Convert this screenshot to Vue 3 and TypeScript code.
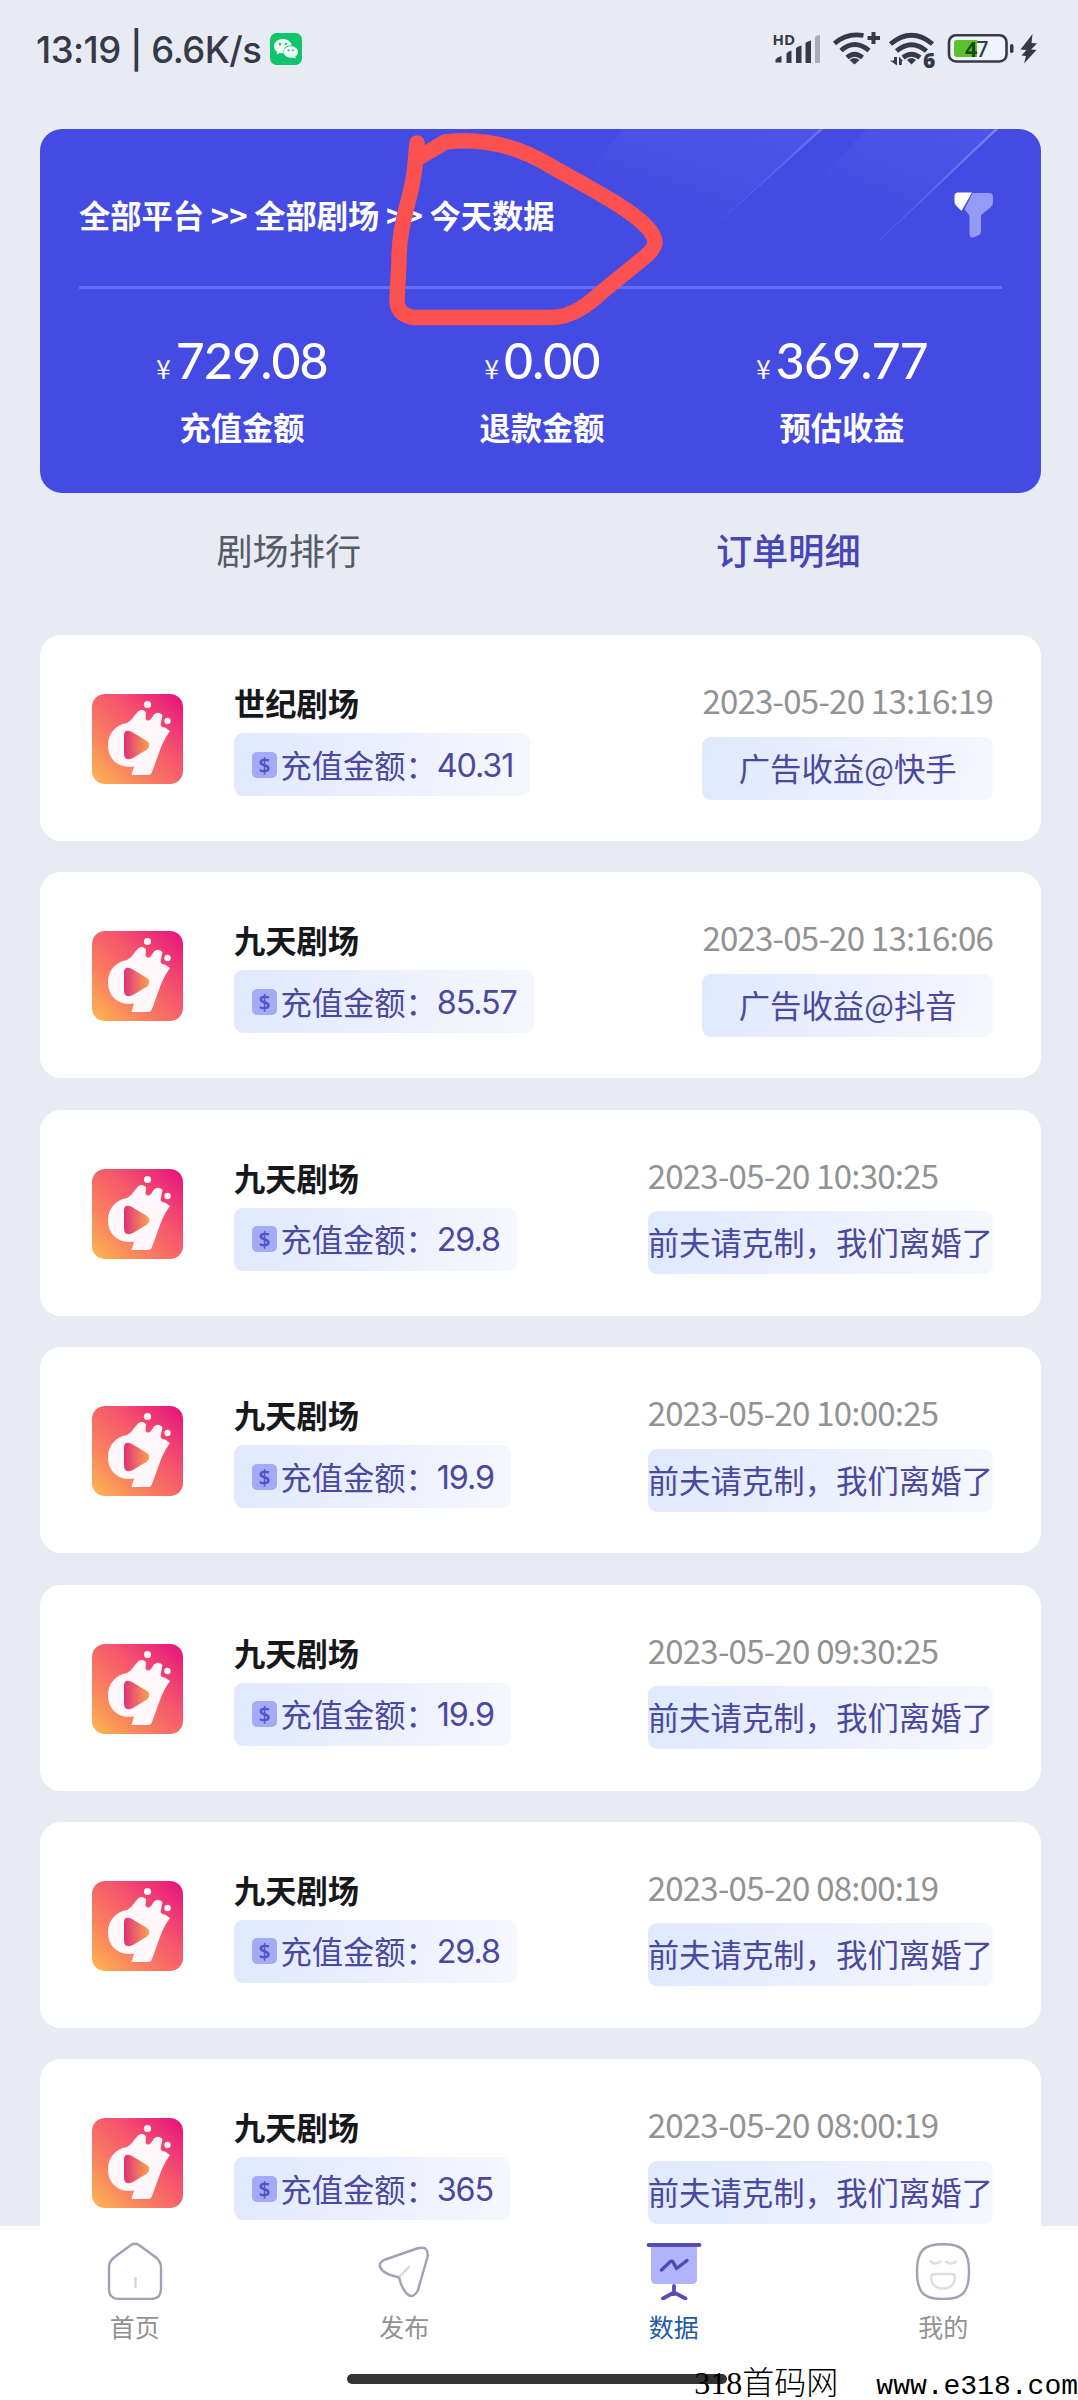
<script setup lang="ts">
interface Metric {
  label: string
  value: string
}

interface Order {
  theater: string
  amount: string
  time: string
  source: string
}

const metrics: Metric[] = [
  { label: '充值金额', value: '729.08' },
  { label: '退款金额', value: '0.00' },
  { label: '预估收益', value: '369.77' },
]

const drama = '前夫请克制，我们离婚了'

const orders: Order[] = [
  { theater: '世纪剧场', amount: '40.31', time: '2023-05-20 13:16:19', source: '广告收益@快手' },
  { theater: '九天剧场', amount: '85.57', time: '2023-05-20 13:16:06', source: '广告收益@抖音' },
  { theater: '九天剧场', amount: '29.8', time: '2023-05-20 10:30:25', source: drama },
  { theater: '九天剧场', amount: '19.9', time: '2023-05-20 10:00:25', source: drama },
  { theater: '九天剧场', amount: '19.9', time: '2023-05-20 09:30:25', source: drama },
  { theater: '九天剧场', amount: '29.8', time: '2023-05-20 08:00:19', source: drama },
  { theater: '九天剧场', amount: '365', time: '2023-05-20 08:00:19', source: drama },
]
</script>

<template>
  <div class="page">
    <header class="status">
      <span class="clock">13:19 | 6.6K/s</span>
      <svg class="wechat" width="32" height="32" viewBox="0 0 32 32">
        <rect width="32" height="32" rx="6.5" fill="#10c46c" />
        <path d="M13 6C7.800 6 4 9.200 4 13.200c0 2.300 1.200 4.200 3.100 5.500L6.500 21.500l3.200-1.600c1 .3 2.100.4 3.300.4l.6 0a6.500 6 0 0 1-.2-1.700c0-3.600 3.400-6.400 7.800-6.400l.6 0C21 8.600 17.400 6 13 6z" fill="#effff5" />
        <path d="M20.800 13.300c-4 0-7.200 2.500-7.200 5.700s3.200 5.700 7.200 5.700c.9 0 1.700-.1 2.500-.3l2.400 1.200-.5-2.200c1.800-1.100 2.800-2.600 2.800-4.400 0-3.200-3.200-5.700-7.200-5.700z" fill="#effff5" />
        <g fill="#10c46c"><circle cx="10" cy="11" r="1.200" /><circle cx="15.700" cy="11" r="1.200" /><circle cx="18.500" cy="17.300" r="1" /><circle cx="23" cy="17.300" r="1" /></g>
      </svg>
      <svg class="signals" width="270" height="44" viewBox="770 28 270 44">
        <text x="772.500" y="45" class="hd">HD</text>
        <g fill="#363947">
          <path d="M775.500 62.500v-3q2-3 6-3.500v6.500z" />
          <path d="M786.500 63v-9.500q2-2.500 5-3v12.500z" />
          <path d="M796 63V48q2-2 5.500-2.500V63z" />
          <path d="M805.500 63V43q2-2 5.500-2.500V63z" />
        </g>
        <path d="M815 63V37q2-2 5-2v28z" fill="#a9abb5" />
        <g fill="none" stroke="#363947" stroke-width="4.800">
          <path d="M834.500 43.500Q847 32.500 863.500 35.500" />
          <path d="M841 50.500Q854.500 38.500 869 50.500" />
          <path d="M847 57.500Q854.500 51 862.500 57.500" />
          <path d="M890.500 44Q911.500 26.500 932.500 44" />
          <path d="M896.500 51Q911.500 38.500 926.500 51" />
          <path d="M903 57.500Q911.500 51 920 57.500" />
          <path d="M873.500 32V44M867.500 38H880" stroke-width="4" />
        </g>
        <g fill="#363947">
          <path d="M849.500 60Q854.500 56 859.500 60L854.500 64.500z" />
          <path d="M907 60Q911.500 56 916 60L911.500 64.500z" />
          <path d="M894 57h3v8.500L890 60.500h4zM899 65v-8.500l4 4.500h-1.200v4z" />
        </g>
        <text x="923" y="67.500" class="six">6</text>
        <rect x="949" y="35.200" width="57.500" height="26.300" rx="7" fill="#f1f3fa" stroke="#363947" stroke-width="2.600" />
        <path d="M957 40h20v17h-20q-3 0-3-3V43q0-3 3-3z" fill="#5ac32b" />
        <text x="965" y="56.500" class="battery"><tspan class="strong">4</tspan>7</text>
        <rect x="1010" y="44" width="3.500" height="9" rx="1.700" fill="#363947" />
        <path d="M1032.500 34L1020.500 49.500l6 .5-5 5.500 4.500.5L1024 63.500 1036.500 50l-5.500-.5 6-6-5.500-.5z" fill="#363947" />
      </svg>
    </header>

    <section class="hero">
      <svg class="streaks" width="1001" height="364" viewBox="40 129 1001 364">
        <defs>
          <linearGradient id="beam" x1="1" y1="0" x2="0" y2="1">
            <stop offset="0" stop-color="#7d82f8" />
            <stop offset="1" stop-color="#6a70f5" stop-opacity="0" />
          </linearGradient>
          <linearGradient id="sheen" gradientUnits="objectBoundingBox" x1="1" y1="0" x2=".35" y2=".75">
            <stop offset="0" stop-color="#7880ff" stop-opacity=".2" />
            <stop offset="1" stop-color="#7880ff" stop-opacity="0" />
          </linearGradient>
        </defs>
        <path d="M622 129H822L703 237H540z" fill="url(#sheen)" />
        <path d="M867 129H997L880 240H760z" fill="url(#sheen)" />
        <path d="M820 129h3L703 237z M995 129h3L880 240z" fill="url(#beam)" stroke="url(#beam)" stroke-width=".6" />
      </svg>
      <div class="scope">
        <span>全部平台 &gt;&gt; 全部剧场 &gt;&gt; 今天数据</span>
        <svg width="40" height="46" viewBox="0 0 40 46">
          <path d="M18.500 1H35q4 0 4 4v5.500q0 3-2.500 5L27 23v16.500q0 2.500-2.500 3.800l-4 1.700q-5 1.500-5-3V25q0-2-1.500-3.500l-3.500-4z" fill="#949bf5" />
          <path d="M4 .5H18L7.500 19 2.500 14Q.5 12 .5 9.500V4Q.5.5 4 .5z" fill="#fff" />
        </svg>
      </div>
      <div class="metrics">
        <div v-for="m in metrics" :key="m.label" class="metric">
          <div class="value"><span class="yen">¥</span>{{ m.value }}</div>
          <div class="label">{{ m.label }}</div>
        </div>
      </div>
      <svg class="scribble" width="280" height="210" viewBox="380 125 280 210">
        <path d="M417 143L415 165C414 180 411 190 408 202C402 225 399 240 399 260L397 301C397 311 405 317 414 317.500H552C573 317 590 303 603 291L646 256C658 245 658 239 646 226C625 205 580 183 549 165C510 142 475 138 445 142L420 157" fill="none" stroke="#fb5151" stroke-width="15.500" stroke-linecap="round" stroke-linejoin="round" />
      </svg>
    </section>

    <div class="tabs">
      <span>剧场排行</span>
      <span class="on">订单明细</span>
    </div>

    <main class="orders">
      <article v-for="(o, i) in orders" :key="i" class="order">
        <svg class="logo" width="91" height="90" viewBox="0 0 91 90">
          <defs>
            <linearGradient :id="'bg' + i" x1="0" y1="1" x2="1" y2="0">
              <stop offset="0" stop-color="#fcb84f" />
              <stop offset=".3" stop-color="#fa8060" />
              <stop offset=".6" stop-color="#f5566c" />
              <stop offset="1" stop-color="#e6107f" />
            </linearGradient>
            <linearGradient :id="'play' + i" x1="0" y1="0" x2="1" y2="0">
              <stop offset="0" stop-color="#e03077" />
              <stop offset="1" stop-color="#f9a451" />
            </linearGradient>
          </defs>
          <rect width="91" height="90" rx="13" :fill="`url(#bg${i})`" />
          <path d="M35 29Q40 26 43 21L46 17.500Q50 14.500 54 18L53.500 25Q56 28 59 25L62 20.500Q66 17 70.500 21L68.500 31Q70 34 73 33.500L78 37 74 43Q70 50 68 56L60 78Q59 81 56 81H39.500L42 72.500C26 75 16 65 16 51C16 40 23 31 35 29z" fill="#fff7fa" />
          <g fill="#fff7fa"><circle cx="55.500" cy="10.500" r="3.600" /><circle cx="75.500" cy="27" r="3.200" /></g>
          <path d="M32 42Q32 34 40 38L55 47Q60 51 55 55.500L41 64Q32 68 32 59z" :fill="`url(#play${i})`" />
        </svg>
        <div class="info">
          <div class="name">{{ o.theater }}</div>
          <div class="pill amount">
            <span class="coin">$</span><span class="caption">充值金额：</span><span class="num">{{ o.amount }}</span>
          </div>
        </div>
        <div class="detail">
          <time>{{ o.time }}</time>
          <div class="pill source">{{ o.source }}</div>
        </div>
      </article>
    </main>

    <nav class="tabbar">
      <a class="item">
        <svg width="56" height="58" viewBox="0 0 56 58" fill="none">
          <path d="M24 3Q28 .5 32 3L49 15.500Q54 20 54 25V47Q54 57 43.500 57H12.500Q2 57 2 47V25Q2 20 7 15.500z" stroke="#a49eb8" stroke-width="2.400" />
          <path d="M28.500 36V45" stroke="#d5d2dd" stroke-width="2.400" stroke-linecap="round" />
        </svg>
        <span>首页</span>
      </a>
      <a class="item">
        <svg width="56" height="58" viewBox="0 0 56 58" fill="none">
          <path d="M8 18L41 6.500Q53 3 51.500 15L42 48Q36 60 28 48Q24 41 23.500 36.500Q23 35 20 34.500Q12 33 7 29Q0 22.500 8 18z" stroke="#a49eb8" stroke-width="2.400" />
          <path d="M24 34L33 25" stroke="#d5d2dd" stroke-width="2" stroke-linecap="round" />
        </svg>
        <span>发布</span>
      </a>
      <a class="item on">
        <svg width="56" height="58" viewBox="0 0 56 58" fill="none">
          <path d="M5 3H51V37Q51 42 46 42H10Q5 42 5 37z" fill="#b1b4fb" />
          <path d="M2.500 3H53.500M28 44V52M28 50.500L17 56.500M28 50.500L39.500 56.500" stroke="#554db2" stroke-width="3.800" stroke-linecap="round" />
          <path d="M15.500 28L24.500 19.500Q26 18.500 27 20L30.500 26.500 41 18.500" stroke="#5048b8" stroke-width="3.400" stroke-linecap="round" stroke-linejoin="round" />
        </svg>
        <span>数据</span>
      </a>
      <a class="item">
        <svg width="56" height="58" viewBox="0 0 56 58" fill="none">
          <path d="M28 2.200C47 2.200 54 8 54 29.500S47 57 28 57 2 51 2 29.500 9 2.200 28 2.200z" stroke="#a49eb8" stroke-width="2.400" />
          <path d="M15.500 19.500Q20 23.500 25.500 19.500M31 19.500Q36 23.500 41 19.500M19 32H37Q40 32 40 36Q39 46.500 28 46.500T16 36Q16 32 19 32z" stroke="#dddde3" stroke-width="2.400" stroke-linecap="round" />
        </svg>
        <span>我的</span>
      </a>
      <div class="grip"></div>
      <div class="mark"><span class="digits">318</span><span class="site">首码网</span><span class="url">www.e318.com</span></div>
    </nav>
  </div>
</template>

<style>
body {
  margin: 0;
}
</style>

<style scoped>
.page {
  display: flex;
  flex-direction: column;
  width: 1078px;
  height: 2400px;
  overflow: hidden;
  background: #e8ebf4;
  font-family: "Noto Sans CJK SC", sans-serif;
  font-size: 31.25px;
  white-space: nowrap;
}
.status {
  display: flex;
  align-items: center;
  height: 100px;
  padding: 0 38px 0 36px;
  box-sizing: border-box;
  margin-bottom: 29px;
  color: #363947;
}
.clock {
  width: 234px;
  font: 500 36.5px/50px Inter, sans-serif;
  letter-spacing: -0.5px;
}
.wechat {
  margin-top: -2px;
}
.signals {
  margin-left: auto;
}
.hd {
  font: 700 15px "Open Sans", sans-serif;
  fill: #363947;
}
.six {
  font: 800 21px "Open Sans", sans-serif;
  fill: #363947;
}
.battery {
  font: 500 21.5px "Noto Sans", sans-serif;
  letter-spacing: -1px;
  fill: #363947;
}
.battery .strong {
  font-weight: 700;
  fill: #174a10;
}
.hero {
  position: relative;
  flex: none;
  width: 1001px;
  height: 364px;
  margin-left: 40px;
  border-radius: 22px;
  background: #444be2;
  color: #fff;
}
.streaks {
  position: absolute;
  left: 0;
  top: 0;
  border-radius: 22px;
}
.scribble {
  position: absolute;
  left: 340px;
  top: -4px;
  overflow: visible;
}
.scope {
  position: relative;
  display: flex;
  align-items: center;
  justify-content: space-between;
  height: 160px;
  padding: 14px 8px 0 0;
  margin: 0 39px;
  box-sizing: border-box;
  border-bottom: 3px solid #666df7;
  font-weight: 700;
  word-spacing: -0.4px;
}
.metrics {
  position: relative;
  display: grid;
  grid-template-columns: repeat(3, 1fr);
  padding: 37px 49px 0 52px;
  text-align: center;
}
.value {
  height: 68px;
  font: 500 50px/68px Lato, sans-serif;
  letter-spacing: -0.8px;
}
.yen {
  margin-right: 6px;
  font: 400 26px "Noto Sans CJK SC", sans-serif;
}
.label {
  margin-top: 10px;
  line-height: 46px;
  font-weight: 700;
}
.tabs {
  display: flex;
  flex: none;
  height: 142px;
  padding: 32px 40px 0 39px;
  box-sizing: border-box;
  font-size: 36.2px;
  line-height: 48px;
  color: #555a63;
}
.tabs span {
  flex: 1;
  text-align: center;
}
.tabs .on {
  font-weight: 500;
  color: #4845b5;
}
.orders {
  display: flex;
  flex: 1;
  flex-direction: column;
  gap: 31.4px;
  min-height: 0;
  padding: 0 37px 0 40px;
  overflow: hidden;
}
.order {
  display: flex;
  flex: none;
  height: 206px;
  padding: 44px 48px 0 52px;
  box-sizing: border-box;
  border-radius: 21px;
  background: #fff;
}
.logo {
  margin-top: 15px;
}
.info {
  margin-left: 51px;
}
.name {
  height: 54px;
  line-height: 48px;
  font-weight: 700;
  color: #17181b;
}
.pill {
  display: flex;
  align-items: center;
  height: 63px;
  box-sizing: border-box;
  border-radius: 9px;
  background: linear-gradient(100deg, #dfe9fd, #eceffd 50%, #f6f7fe);
  color: #4a489f;
}
.amount {
  width: fit-content;
  padding: 0 17px 0 18px;
}
.coin {
  width: 25px;
  height: 26px;
  margin-right: 3.5px;
  border-radius: 5px;
  background: #a5aaf5;
  color: #5452c9;
  font: 600 21px/26px "Noto Sans", sans-serif;
  text-align: center;
}
.caption {
  margin-top: -1px;
}
.num {
  margin-top: 2px;
  font: 400 32.3px/50px Inter, sans-serif;
  letter-spacing: -1.1px;
}
.detail {
  margin-left: auto;
}
.detail time {
  display: block;
  height: 57.5px;
  font-size: 33px;
  line-height: 43px;
  letter-spacing: -0.76px;
  color: #929292;
}
.source {
  justify-content: center;
  padding-bottom: 2px;
  font-size: 31.4px;
}
.tabbar {
  position: relative;
  display: flex;
  flex: none;
  height: 174px;
  background: #fff;
}
.item {
  display: flex;
  flex: 1;
  flex-direction: column;
  align-items: center;
  padding-top: 16px;
  font-size: 25px;
  line-height: 36px;
  color: #929292;
}
.item span {
  margin-top: 8px;
}
.item.on {
  color: #225aa5;
}
.grip {
  position: absolute;
  left: 347px;
  top: 148px;
  width: 380px;
  height: 10px;
  border-radius: 5px;
  background: #333;
}
.mark {
  position: absolute;
  right: 0;
  bottom: 0;
  display: flex;
  align-items: baseline;
  color: #000;
  line-height: 26px;
}
.digits {
  font-family: "Liberation Serif", serif;
  font-size: 32px;
}
.site {
  margin-right: 38px;
  font-size: 32px;
  font-weight: 300;
}
.url {
  font-family: "Liberation Mono", monospace;
  font-size: 28px;
}
</style>
